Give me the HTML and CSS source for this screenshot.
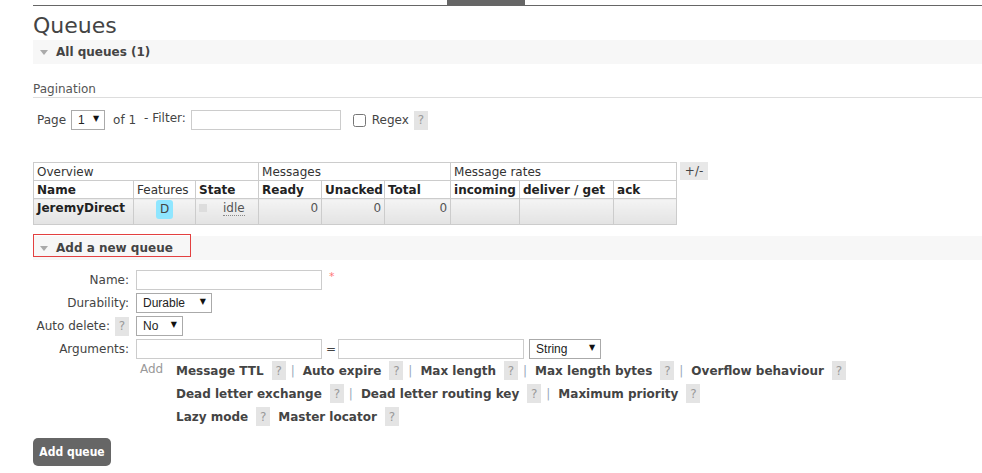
FILE: index.html
```html
<!DOCTYPE html>
<html>
<head>
<meta charset="utf-8">
<link rel="stylesheet" href="styles.css">
</head>
<body>
<div class="topbar"><div class="tab"></div></div>
<main class="main">
  <h1 class="title">Queues</h1>
  <div class="section-bar"><span class="tri"></span><span class="section-label">All queues (1)</span></div>

  <div class="pag-head">Pagination</div>
  <div class="pag-row">
    <span class="pag-text">Page</span>
    <span class="sel sel-page"><select><option>1</option></select></span>
    <span class="pag-text">of 1</span>
    <span class="pag-text filter">- Filter:</span>
    <input class="txt filter-input" type="text">
    <input class="chk" type="checkbox">
    <span class="pag-text">Regex</span>
    <span class="help">?</span>
  </div>

  <div class="table-wrap">
    <table class="list">
      <colgroup>
        <col style="width:100px"><col style="width:62px"><col style="width:63px">
        <col style="width:63px"><col style="width:63px"><col style="width:66px">
        <col style="width:69px"><col style="width:94px"><col style="width:63px">
      </colgroup>
      <tr class="group">
        <th colspan="3">Overview</th>
        <th colspan="3">Messages</th>
        <th colspan="3">Message rates</th>
      </tr>
      <tr class="heads">
        <th class="b">Name</th>
        <th>Features</th>
        <th class="b">State</th>
        <th class="b">Ready</th>
        <th class="b">Unacked</th>
        <th class="b">Total</th>
        <th class="b">incoming</th>
        <th class="b">deliver / get</th>
        <th class="b">ack</th>
      </tr>
      <tr class="row">
        <td class="b">JeremyDirect</td>
        <td class="c"><span class="badge">D</span></td>
        <td><span class="state"><span class="sq"></span><span class="idle">idle</span></span></td>
        <td class="r">0</td>
        <td class="r">0</td>
        <td class="r">0</td>
        <td></td>
        <td></td>
        <td></td>
      </tr>
    </table>
    <span class="toggle">+/-</span>
  </div>

  <div class="section-bar bar2"><span class="boxed"><span class="tri"></span><span class="section-label">Add a new queue</span></span></div>

  <div class="form">
    <label class="lbl">Name:</label>
    <div class="ctl"><input class="txt w186" type="text"><span class="req">*</span></div>

    <label class="lbl">Durability:</label>
    <div class="ctl"><span class="sel sel-dur"><select><option>Durable</option></select></span></div>

    <label class="lbl">Auto delete: <span class="help">?</span></label>
    <div class="ctl"><span class="sel sel-no"><select><option>No</option></select></span></div>

    <label class="lbl">Arguments:</label>
    <div class="ctl"><input class="txt w186" type="text"><span class="eq">=</span><input class="txt w186" type="text"><span class="sel sel-str"><select><option>String</option></select></span></div>

    <div class="empty"></div>
    <div class="args">
      <span class="add">Add</span>
      <div class="links">
        <div class="line"><b>Message TTL</b><span class="help">?</span><span class="sep">|</span><b>Auto expire</b><span class="help">?</span><span class="sep">|</span><b>Max length</b><span class="help">?</span><span class="sep">|</span><b>Max length bytes</b><span class="help">?</span><span class="sep">|</span><b>Overflow behaviour</b><span class="help">?</span></div>
        <div class="line"><b>Dead letter exchange</b><span class="help">?</span><span class="sep">|</span><b>Dead letter routing key</b><span class="help">?</span><span class="sep">|</span><b>Maximum priority</b><span class="help">?</span></div>
        <div class="line"><b>Lazy mode</b><span class="help">?</span><b class="nosep">Master locator</b><span class="help">?</span></div>
      </div>
    </div>
  </div>

  <button class="btn">Add queue</button>
</main>
</body>
</html>
```

FILE: styles.css
```css
* { box-sizing: border-box; }
body {
  margin: 0;
  font-family: "DejaVu Sans", Verdana, sans-serif;
  font-size: 12px;
  color: #444;
  background: #fff;
}
.topbar {
  margin-left: 33px;
  height: 6px;
  border-bottom: 1px solid #666;
  display: flex;
}
.tab {
  margin-left: 414px;
  width: 78px;
  height: 5px;
  background: #666;
}
.main {
  padding-left: 33px;
}
.title {
  margin: 0;
  height: 34px;
  padding-top: 6px;
  font-size: 22px;
  line-height: 28px;
  font-weight: normal;
  color: #444;
}
.section-bar {
  height: 24px;
  background: #f7f7f7;
  display: flex;
  align-items: center;
  padding-left: 7px;
}
.tri {
  width: 0;
  height: 0;
  border-left: 4px solid transparent;
  border-right: 4px solid transparent;
  border-top: 5px solid #aaa;
  margin-right: 8px;
  margin-top: 1px;
}
.section-label {
  font-weight: bold;
  color: #444;
}
.pag-head {
  margin-top: 15px;
  height: 19px;
  line-height: 21px;
  border-bottom: 1px solid #ddd;
  color: #555;
}
.pag-row {
  margin-top: 12px;
  height: 20px;
  display: flex;
  align-items: center;
  padding-left: 4px;
}
.pag-text { color: #444; }
.filter { margin-left: 8px; margin-right: 5px; position: relative; top: -2px; }
.txt {
  height: 20px;
  border: 1px solid #ccc;
  background: #fff;
  padding: 0 4px;
  margin: 0;
  font: 12px "Liberation Sans", Arial, sans-serif;
}
.filter-input { width: 150px; }
.chk { width: 13px; height: 13px; margin: 0 6px 0 12px; }
.sel {
  position: relative;
  display: inline-block;
  height: 20px;
}
.sel select {
  appearance: none;
  -webkit-appearance: none;
  width: 100%;
  height: 20px;
  border: 1px solid #aaa;
  background: #fff;
  margin: 0;
  padding: 0 0 0 6px;
  font: 12px "Liberation Sans", Arial, sans-serif;
  color: #222;
  border-radius: 0;
}
.sel::after {
  content: "▼";
  position: absolute;
  right: 6px;
  top: 4px;
  font: 8px "DejaVu Sans", sans-serif;
  color: #111;
  pointer-events: none;
}
.sel-page { width: 34px; margin: 0 8px 0 5px; }
.sel-dur { width: 76px; }
.sel-no { width: 47px; }
.sel-str { width: 72px; margin-left: 5px; }
.help {
  display: inline-flex;
  align-items: center;
  justify-content: center;
  width: 14px;
  height: 19px;
  background: #e4e4e4;
  color: #999;
  font-size: 12px;
  font-weight: normal;
  margin-left: 5px;
}
.table-wrap {
  margin-top: 32px;
  display: flex;
  align-items: flex-start;
}
.list {
  border-collapse: collapse;
  table-layout: fixed;
  width: 644px;
}
.list th, .list td {
  border: 1px solid #ccc;
  padding: 0 3px;
  text-align: left;
  font-weight: normal;
  white-space: nowrap;
  overflow: hidden;
  color: #333;
}
.list tr.group th, .list tr.heads th { height: 18px; line-height: 16px; }
.list .b { font-weight: bold; color: #222; }
.list tr.row td {
  height: 26px;
  vertical-align: top;
  padding-top: 2px;
  background: linear-gradient(#f4f4f4, #e3e3e3);
}
.list td.r { text-align: right; color: #555; }
.list td.c { text-align: center; }
.badge {
  display: inline-block;
  width: 17px;
  height: 19px;
  line-height: 19px;
  text-align: center;
  background: #8fe6ff;
  border-radius: 3px;
  color: #444;
  margin-top: -1px;
}
.state { display: inline-flex; align-items: flex-start; }
.sq {
  width: 8px;
  height: 8px;
  background: #ddd;
  margin: 3px 0 0 0;
}
.idle {
  margin-left: 16px;
  border-bottom: 1px dotted #888;
  line-height: 14px;
  color: #555;
}
.toggle {
  margin-left: 3px;
  width: 28px;
  height: 18px;
  line-height: 18px;
  text-align: center;
  background: #e8e8e8;
  color: #444;
}
.bar2 {
  margin-top: 11px;
  padding-left: 0;
  align-items: flex-start;
}
.boxed {
  display: flex;
  align-items: center;
  width: 158px;
  height: 23px;
  margin-top: -2px;
  border: 1px solid #e34040;
  padding-left: 6px;
  padding-top: 4px;
}
.form {
  margin-top: 10px;
  display: grid;
  grid-template-columns: 96px auto;
  column-gap: 7px;
  row-gap: 3px;
  align-items: center;
}
.lbl {
  text-align: right;
  color: #444;
  display: flex;
  justify-content: flex-end;
  align-items: center;
  height: 20px;
}
.ctl { display: flex; align-items: center; height: 20px; }
.w186 { width: 186px; }
.req { color: #f77; margin-left: 7px; margin-top: -8px; font-size: 11px; }
.eq { margin: 0 2px 0 4px; color: #444; }
.args {
  display: flex;
  align-items: flex-start;
  margin-top: -1px;
}
.add {
  width: 40px;
  padding-left: 4px;
  color: #999;
  line-height: 16px;
}
.links { display: flex; flex-direction: column; gap: 4px; }
.line {
  display: flex;
  align-items: center;
  height: 19px;
}
.line b { font-weight: bold; color: #444; }
.line .help { margin-left: 8px; }
.sep { color: #99aabb; margin: 0 8px 0 5px; }
.nosep { margin-left: 8px; }
.btn {
  margin-top: 12px;
  width: 78px;
  height: 28px;
  border: 0;
  border-radius: 5px;
  background: #666;
  color: #fff;
  font: bold 12px "DejaVu Sans Condensed", "DejaVu Sans", sans-serif;
  padding: 0;
}
```
